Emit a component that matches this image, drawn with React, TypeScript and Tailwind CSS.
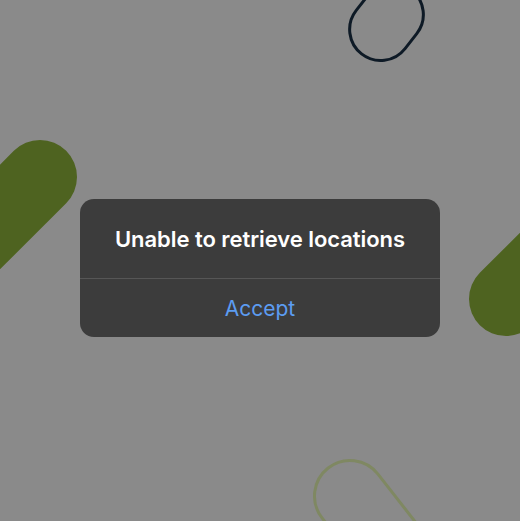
import React from 'react';

// Decorative capsules scattered on the backdrop
const Backdrop: React.FC = () => (
  <svg
    className="absolute inset-0 pointer-events-none"
    width={520}
    height={521}
    viewBox="0 0 520 521"
  >
    {/* left filled pill */}
    <line x1={40} y1={177} x2={-120} y2={337} stroke="#4e6320" strokeWidth={74} strokeLinecap="round" />
    {/* right filled pill */}
    <line x1={506} y1={299} x2={660} y2={145} stroke="#4e6320" strokeWidth={74} strokeLinecap="round" />
    {/* top navy outline */}
    <rect
      x={386.5 - 40.5}
      y={22 - 31}
      width={81}
      height={62}
      rx={31}
      fill="none"
      stroke="#0e1a26"
      strokeWidth={3}
      transform="rotate(-52 386.5 22)"
    />
    {/* bottom faint outline */}
    <rect
      x={350 - 35.5}
      y={496 - 35.5}
      width={170}
      height={71}
      rx={35.5}
      fill="none"
      stroke="#7f8862"
      strokeWidth={3}
      transform="rotate(52 350 496)"
    />
  </svg>
);

export default function App() {
  return (
    <div className="relative w-[520px] h-[521px] overflow-hidden bg-[#8a8a8a]" style={{ fontFamily: 'Inter, "Noto Sans", sans-serif' }}>
      <Backdrop />
      <div className="relative flex justify-center pt-[199px]">
        <div className="w-[360px] rounded-[14px] bg-[#3c3c3c] overflow-hidden">
          <div className="h-[80px] pt-[2px] flex items-center justify-center border-b border-[#565656]">
            <span className="text-[22px] font-semibold text-white tracking-[-0.05px]">Unable to retrieve locations</span>
          </div>
          <button className="w-full h-[58px] pt-[2px] flex items-center justify-center text-[21px] text-[#5c9cf2]">
            Accept
          </button>
        </div>
      </div>
    </div>
  );
}
